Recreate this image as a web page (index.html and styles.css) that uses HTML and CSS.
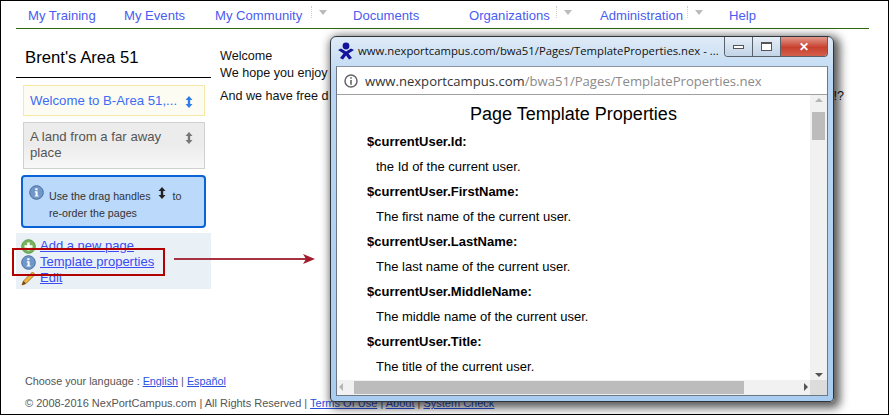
FILE: index.html
```html
<!DOCTYPE html>
<html lang="en">
<head>
    <meta charset="UTF-8">
    <title>Brent's Area 51</title>
    <link rel="stylesheet" href="styles.css">
</head>
<body>
    <div class="frame">
        <nav class="top-nav">
            <a href="#" class="w-training">My Training</a>
            <a href="#" class="w-events">My Events</a>
            <a href="#" class="w-community">My Community</a>
            <span class="drop w-drop"><i></i></span>
            <a href="#" class="w-documents">Documents</a>
            <a href="#" class="w-orgs">Organizations</a>
            <span class="drop w-drop2"><i></i></span>
            <a href="#" class="w-admin">Administration</a>
            <span class="drop w-drop3"><i></i></span>
            <a href="#">Help</a>
        </nav>

        <div class="main">
            <aside class="sidebar">
                <h2 class="area-title">Brent's Area 51</h2>
                <div class="page-item active">
                    <a href="#">Welcome to B-Area 51,...</a>
                    <svg class="handle" width="8" height="12" viewBox="0 0 8 12"><path d="M4 0 7.5 4H5.2V8H7.5L4 12 .5 8H2.8V4H.5Z"/></svg>
                </div>
                <div class="page-item plain">
                    <span>A land from a far away place</span>
                    <svg class="handle" width="8" height="12" viewBox="0 0 8 12"><path d="M4 0 7.5 4H5.2V8H7.5L4 12 .5 8H2.8V4H.5Z"/></svg>
                </div>
                <div class="tip">
                    <svg class="ico" width="15" height="15" viewBox="0 0 15 15"><circle cx="7.5" cy="7.5" r="6.8" fill="#6f97c9" stroke="#4a6f9f"/><path d="M6.3 3.2h2.2v2H6.3zM5.8 6.2h2.8v4.2h1v1.2H5.6v-1.2h1V7.4h-.8z" fill="#fff"/></svg>
                    <p>Use the drag handles
                        <svg class="tip-handle" width="8" height="12" viewBox="0 0 8 12"><path d="M4 0 7.5 4H5.2V8H7.5L4 12 .5 8H2.8V4H.5Z"/></svg>
                        to<br>re-order the pages</p>
                </div>
                <ul class="actions">
                    <li>
                        <svg class="ico" width="15" height="15" viewBox="0 0 15 15"><circle cx="7.5" cy="7.5" r="6.8" fill="#79b25f" stroke="#5c9a48"/><path d="M6.2 3.5h2.6v2.7h2.7v2.6H8.8v2.7H6.2V8.8H3.5V6.2h2.7z" fill="#fff"/></svg>
                        <a href="#">Add a new page</a>
                    </li>
                    <li>
                        <svg class="ico" width="15" height="15" viewBox="0 0 15 15"><circle cx="7.5" cy="7.5" r="6.8" fill="#6f97c9" stroke="#4a6f9f"/><path d="M6.3 3.2h2.2v2H6.3zM5.8 6.2h2.8v4.2h1v1.2H5.6v-1.2h1V7.4h-.8z" fill="#fff"/></svg>
                        <a href="#">Template properties</a>
                    </li>
                    <li>
                        <svg class="ico" width="15" height="15" viewBox="0 0 15 15"><path d="M11.5 1 14 3.5 5 12.5 1 14 2.5 10Z" fill="#eeb73f" stroke="#a9782a"/><path d="M1 14 2.5 10 5 12.5Z" fill="#70441f"/></svg>
                        <a href="#">Edit</a>
                    </li>
                </ul>
            </aside>
            <section class="content">
                <p class="welcome">Welcome<br>We hope you enjoy</p>
                <p class="free"><span>And we have free d</span><span>!?</span></p>
            </section>
        </div>

        <footer class="foot">
            <p class="lang">Choose your language : <a href="#">English</a> | <a href="#">Español</a></p>
            <p class="copy">© 2008-2016 NexPortCampus.com | All Rights Reserved | <a href="#">Terms Of Use</a> | <a href="#">About</a> | <a href="#">System Check</a></p>
        </footer>

        <!-- annotation over the page -->
        <div class="callout"></div>
        <svg class="arrow" width="142" height="12" viewBox="0 0 142 12"><path d="M0 6H136" stroke="#a8323f" stroke-width="2"/><path d="M129 1 141 6 129 11 132 6Z" fill="#a01c2c"/></svg>

        <!-- popup window -->
        <div class="window">
            <div class="titlebar">
                <svg class="logo" width="16" height="18" viewBox="0 0 16 18"><circle cx="8" cy="4" r="3.4" fill="#14149a"/><path d="M0 8 3 6.5 8 9.5 13 6.5 16 8 10.5 11.5 14 16 11 17.5 8 13.5 5 17.5 2 16 5.5 11.5Z" fill="#14149a"/></svg>
                <span class="win-title">www.nexportcampus.com/bwa51/Pages/TemplateProperties.nex - ...</span>
                <div class="win-btns">
                    <span class="btn"><i class="min"></i></span>
                    <span class="btn"><i class="max"></i></span>
                    <span class="btn close">✕</span>
                </div>
            </div>
            <div class="win-body">
                <div class="address">
                    <svg width="14" height="14" viewBox="0 0 14 14"><circle cx="7" cy="7" r="6" fill="none" stroke="#666" stroke-width="1.5"/><path d="M6.2 3.2h1.6v1.6H6.2zM6.2 6h1.6v4.8H6.2z" fill="#666"/></svg>
                    <span class="host">www.nexportcampus.com<span class="path">/bwa51/Pages/TemplateProperties.nex</span></span>
                </div>
                <div class="viewport">
                    <div class="doc">
                        <h1>Page Template Properties</h1>
                        <h3>$currentUser.Id:</h3>
                        <p>the Id of the current user.</p>
                        <h3>$currentUser.FirstName:</h3>
                        <p>The first name of the current user.</p>
                        <h3>$currentUser.LastName:</h3>
                        <p>The last name of the current user.</p>
                        <h3>$currentUser.MiddleName:</h3>
                        <p>The middle name of the current user.</p>
                        <h3>$currentUser.Title:</h3>
                        <p>The title of the current user.</p>
                    </div>
                    <div class="vscroll">
                        <i class="up"></i>
                        <b class="thumb"></b>
                        <i class="down"></i>
                    </div>
                    <div class="hscroll">
                        <i class="left"></i>
                        <b class="thumb"></b>
                        <i class="right"></i>
                    </div>
                    <div class="corner"></div>
                </div>
            </div>
        </div>
    </div>
</body>
</html>
```

FILE: styles.css
```css
html, body {
    margin: 0;
    padding: 0;
}

body {
    font-family: "Liberation Sans", Arial, sans-serif;
    background-color: #fff;
    color: #111;
}

p, h1, h2, h3, ul {
    margin: 0;
    padding: 0;
}

a {
    color: #3b4cf5;
}

.frame {
    position: relative;
    box-sizing: border-box;
    width: 889px;
    height: 415px;
    border: 1px solid #000;
    overflow: hidden;
    padding: 0 19px 0 15px;
}

/* nav */
.top-nav {
    display: flex;
    align-items: center;
    height: 25px;
    padding: 2px 0 0 12px;
    border-bottom: 1px solid #2f6a12;
    font-size: 13.1px;
}

.top-nav a {
    color: #4a5cf0;
    text-decoration: none;
    white-space: nowrap;
}

.w-training { width: 96px; }
.w-events { width: 91px; }
.w-community { width: 96px; }
.w-documents { width: 116px; }
.w-orgs { width: 87px; }
.w-admin { width: 87px; }

.drop {
    display: block;
    height: 12px;
    margin-bottom: 8px;
    border-left: 1px dotted #ccc;
}

.w-drop { width: 41px; }
.w-drop2 { width: 43px; }
.w-drop3 { width: 41px; }

.drop i {
    display: block;
    width: 0;
    margin: 4px 0 0 7px;
    border: 4px solid transparent;
    border-top: 5px solid #bbb;
    border-bottom: 0;
}

/* left column */
.main {
    display: flex;
}

.sidebar {
    box-sizing: border-box;
    width: 195px;
    margin-right: 9px;
}

.area-title {
    height: 49px;
    box-sizing: border-box;
    padding: 19px 0 0 9px;
    border-bottom: 1px solid #000;
    font-size: 16.7px;
    font-weight: normal;
    color: #000;
}

.page-item {
    display: flex;
    justify-content: space-between;
    box-sizing: border-box;
    width: 182px;
    margin-left: 7px;
    font-size: 13.2px;
    line-height: 16px;
}

.page-item .handle {
    flex: none;
    margin: 3px 5px 0 0;
}

.page-item.active {
    height: 31px;
    margin-top: 7px;
    padding: 7px 6px;
    border: 1px solid #f8e8a6;
    background-color: #fdfcf3;
}

.page-item.active a {
    color: #3b6cf5;
    text-decoration: none;
    white-space: nowrap;
}

.page-item.active .handle {
    fill: #2f7de8;
}

.page-item.plain {
    height: 47px;
    margin-top: 6px;
    padding: 6px 6px;
    border: 1px solid #d0d0d0;
    background: linear-gradient(#ececec 0, #ececec 50%, #f7f7f7 100%);
    color: #555;
}

.page-item.plain span {
    width: 135px;
}

.page-item.plain .handle {
    fill: #777;
}

.tip {
    display: flex;
    box-sizing: border-box;
    width: 185px;
    height: 53px;
    margin: 6px 0 0 5px;
    padding: 7px 6px;
    border: 2px solid #0a62d6;
    border-radius: 4px;
    background-color: #bbd9fb;
}

.tip .ico {
    flex: none;
    margin: 1px 5px 0 0;
}

.tip p {
    font-size: 10.7px;
    line-height: 16.5px;
    padding-top: 3px;
    color: #333;
    white-space: nowrap;
}

.tip-handle {
    margin: 0 4px;
    fill: #222;
    vertical-align: 1px;
}

.actions {
    list-style: none;
    height: 56px;
    margin-top: 5px;
    padding: 5px 0 0 5px;
    box-sizing: border-box;
    background-color: #e9f0f6;
    font-size: 13px;
    line-height: 16px;
}

.actions li {
    display: flex;
    align-items: center;
    height: 16px;
}

.actions .ico {
    flex: none;
    margin-right: 4px;
}

.actions a {
    color: #3b4cf5;
}

/* content */
.content {
    font-size: 12.6px;
    line-height: 16.5px;
    color: #111;
    padding-top: 19px;
}

.welcome {
    margin-bottom: 7px;
}

.free {
    display: flex;
    width: 624px;
    justify-content: space-between;
}

/* footer */
.foot {
    position: absolute;
    left: 24px;
    bottom: 0;
    font-size: 11px;
    color: #555;
}

.lang {
    margin-bottom: 10px;
    font-size: 10.8px;
}

.copy {
    height: 17px;
    white-space: nowrap;
}

.foot a {
    color: #2a50e0;
}

/* red box + arrow */
.callout {
    position: absolute;
    left: 11px;
    top: 247px;
    width: 149px;
    height: 24px;
    border: 2px solid #b30000;
}

.arrow {
    position: absolute;
    left: 173px;
    top: 252px;
}

/* popup */
.window {
    position: absolute;
    left: 329px;
    top: 35px;
    width: 504px;
    height: 366px;
    box-sizing: border-box;
    border: 1px solid #30353c;
    border-radius: 6px 6px 4px 4px;
    background: linear-gradient(#dfeaf6, #b9d7f4 12%, #a9cdf0);
    box-shadow: 3px 3px 10px 3px rgba(0, 0, 0, 0.65);
    padding: 0 5px 5px;
    display: flex;
    flex-direction: column;
}

.titlebar {
    display: flex;
    align-items: flex-start;
    height: 29px;
    flex: none;
}

.logo {
    margin: 5px 4px 0 2px;
    flex: none;
}

.win-title {
    font-family: "Open Sans", "Liberation Sans", sans-serif;
    font-size: 11.3px;
    line-height: 28px;
    white-space: nowrap;
    color: #111;
}

.win-btns {
    display: flex;
    margin-left: auto;
    height: 19px;
    border: 1px solid #59616c;
    border-top: 0;
    border-radius: 0 0 4px 4px;
    overflow: hidden;
}

.btn {
    display: flex;
    justify-content: center;
    align-items: center;
    width: 27px;
    border-right: 1px solid #59616c;
    background: linear-gradient(#e6eef7, #c3d4e8);
}

.btn .min {
    display: block;
    width: 9px;
    height: 2px;
    border: 1px solid #555;
    background-color: #fff;
}

.btn .max {
    display: block;
    box-sizing: border-box;
    width: 11px;
    height: 9px;
    border: 1px solid #555;
    border-top-width: 2px;
    background-color: #fff;
}

.btn.close {
    width: 46px;
    border-right: 0;
    background: linear-gradient(#e39a8d, #c8402e 55%, #d2604c);
    color: #fff;
    font-size: 12px;
    font-weight: bold;
}

.win-body {
    flex: 1;
    display: flex;
    flex-direction: column;
    min-height: 0;
    border: 1px solid #6d7785;
    border-top-color: #8a939e;
    background-color: #fff;
}

.address {
    display: flex;
    align-items: center;
    gap: 7px;
    flex: none;
    height: 27px;
    padding-left: 7px;
    border-bottom: 1px solid #a0a0a0;
    font-family: "Open Sans", "Liberation Sans", sans-serif;
    font-size: 13.1px;
    color: #333;
}

.address .path {
    color: #8a8a8a;
}

.viewport {
    flex: 1;
    min-height: 0;
    display: grid;
    grid-template-columns: 1fr 17px;
    grid-template-rows: 1fr 15px;
    overflow: hidden;
}

.doc {
    overflow: hidden;
    padding: 9px 0 0 30px;
    color: #000;
}

.doc h1 {
    padding-right: 30px;
    height: 30px;
    font-size: 18px;
    font-weight: normal;
    line-height: 20px;
    text-align: center;
}

.doc h3 {
    font-size: 13px;
    line-height: 16px;
    height: 25px;
}

.doc p {
    font-size: 13px;
    line-height: 16px;
    height: 25px;
    padding-left: 9px;
}

.vscroll {
    position: relative;
    background-color: #f1f1f1;
}

.vscroll .thumb {
    position: absolute;
    left: 2px;
    top: 17px;
    width: 13px;
    height: 28px;
    background-color: #bcbcbc;
}

.vscroll .up, .vscroll .down {
    position: absolute;
    left: 5px;
    width: 0;
    border: 4px solid transparent;
}

.vscroll .up {
    top: 3px;
    border-top: 0;
    border-bottom-color: #b5b5b5;
}

.vscroll .down {
    bottom: 3px;
    border-bottom: 0;
    border-top-color: #555;
}

.hscroll {
    position: relative;
    background-color: #f1f1f1;
}

.hscroll .thumb {
    position: absolute;
    left: 17px;
    top: 1px;
    width: 390px;
    height: 13px;
    background-color: #bcbcbc;
}

.hscroll .left, .hscroll .right {
    position: absolute;
    top: 3px;
    width: 0;
    border: 4px solid transparent;
}

.hscroll .left {
    left: 2px;
    border-left: 0;
    border-right-color: #b5b5b5;
}

.hscroll .right {
    right: 2px;
    border-right: 0;
    border-left-color: #555;
}

.corner {
    background-color: #dcdcdc;
}
```
